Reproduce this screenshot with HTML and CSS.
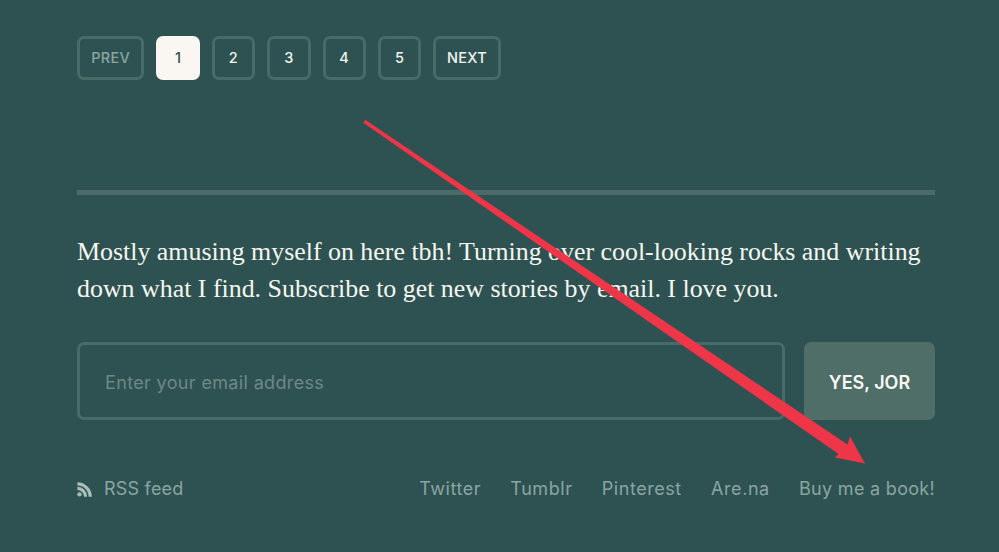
FILE: index.html
```html
<!DOCTYPE html>
<html lang="en">
<head>
<meta charset="utf-8">
<title>Subscribe</title>
<link rel="stylesheet" href="styles.css">
</head>
<body>
<main class="page">
  <nav class="pager">
    <a class="pg pg-wide pg-off">PREV</a>
    <a class="pg pg-on">1</a>
    <a class="pg">2</a>
    <a class="pg">3</a>
    <a class="pg">4</a>
    <a class="pg">5</a>
    <a class="pg pg-wide">NEXT</a>
  </nav>
  <hr class="rule">
  <p class="blurb">Mostly amusing myself on here tbh! Turning over cool-looking rocks and writing down what I find. Subscribe to get new stories by email. I love you.</p>
  <form class="signup">
    <input class="email" type="text" placeholder="Enter your email address">
    <button class="yes" type="button">YES, JOR</button>
  </form>
  <footer class="foot">
    <a class="rss">
      <svg class="rss-icon" viewBox="0 0 16 16" aria-hidden="true"><circle cx="2.6" cy="13.2" r="2.3"/><path d="M.4 5.2v3.4a6.9 6.9 0 0 1 7 7h3.4a10.2 10.2 0 0 0-10.4-10.4z"/><path d="M.4.2v3.4a12 12 0 0 1 12 12h3.4A15.4 15.4 0 0 0 .4.2z"/></svg>
      RSS feed
    </a>
    <div class="links">
      <a>Twitter</a><a>Tumblr</a><a>Pinterest</a><a>Are.na</a><a class="book">Buy me a book!</a>
    </div>
  </footer>
</main>
<svg class="arrow" viewBox="0 0 999 552" aria-hidden="true">
  <path d="M365.5 120 L363 122.5 L838.5 454 L835 457.5 L865 463.5 L850 436.5 L847.5 444.5 Z"/>
</svg>
</body>
</html>
```

FILE: styles.css
```css
* { box-sizing: border-box; }
html, body { margin: 0; height: 100%; }
body {
  background: #2e5251;
  overflow: hidden;
  position: relative;
  font-family: Inter, "Liberation Sans", sans-serif;
}
.page { padding: 36px 64px 0 77px; }
.pager { display: flex; gap: 12px; }
.pg {
  width: 43.4px;
  height: 43.5px;
  display: flex;
  align-items: center;
  justify-content: center;
  border: 3px solid #466b69;
  border-radius: 7px;
  color: #f2f2ee;
  font-size: 14.5px;
  font-weight: 500;
  letter-spacing: .3px;
}
.pg-wide { width: 67.4px; }
.pg-off { color: #8ba5a1; }
.pg-on { background: #faf6f2; border-color: #faf6f2; color: #2e5251; }
.rule {
  margin: 110.5px 0 0;
  height: 5px;
  border: 0;
  background: #4a6b69;
}
.blurb {
  margin: 38px 0 0;
  font-family: "Liberation Serif", serif;
  font-size: 25.9px;
  line-height: 37px;
  color: #f6f6f0;
}
.signup { display: flex; gap: 19px; margin-top: 35px; }
.email {
  flex: 1;
  height: 78px;
  padding: 2px 25px 0;
  background: transparent;
  border: 3px solid #466b69;
  border-radius: 7px;
  color: #fff;
  font-family: inherit;
  font-size: 18px;
  letter-spacing: .35px;
  outline: none;
}
.email::placeholder { color: #6d8886; opacity: 1; }
.yes {
  width: 131px;
  height: 78px;
  padding: 2px 0 0;
  border: 0;
  border-radius: 7px;
  background: #4f6e68;
  color: #fafaf5;
  font-family: inherit;
  font-size: 18px;
  font-weight: 600;
}
.foot {
  display: flex;
  justify-content: space-between;
  align-items: center;
  margin-top: 58px;
  color: #8ba5a1;
  font-size: 18px;
  line-height: 22px;
}
.rss { display: flex; align-items: center; gap: 12px; letter-spacing: .2px; }
.rss-icon { width: 15px; height: 15px; fill: #a9bebb; }
.links { display: flex; gap: 29.3px; letter-spacing: .55px; }
.links .book { letter-spacing: .3px; }
.arrow {
  position: absolute;
  left: 0;
  top: 0;
  width: 999px;
  height: 552px;
  fill: #ef3548;
  pointer-events: none;
}
```
